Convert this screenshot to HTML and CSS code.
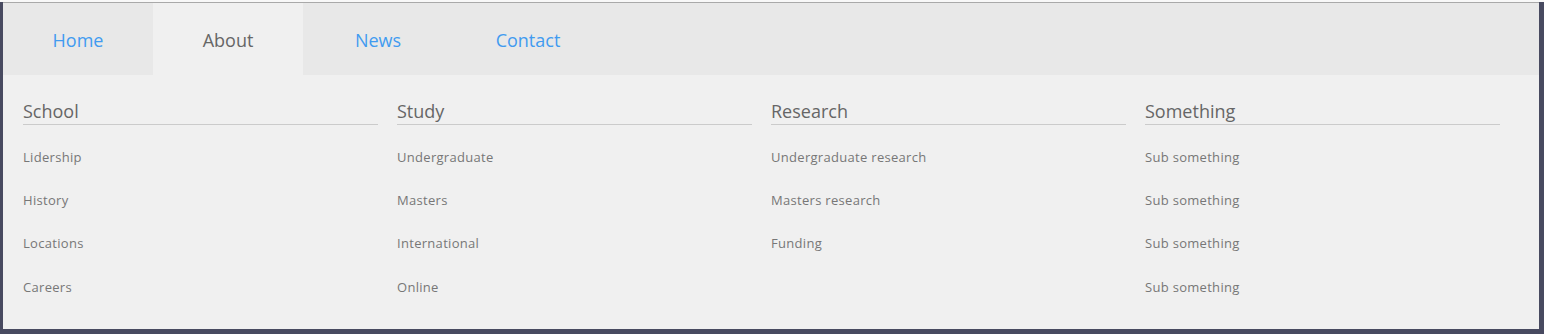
FILE: index.html
```html
<!DOCTYPE html>
<html lang="en">
<head>
  <meta charset="UTF-8" />
  <meta name="viewport" content="width=device-width, initial-scale=1.0" />
  <title>Mega Menu</title>
  <link rel="stylesheet" href="styles.css">
</head>
<body>
  <div class="menu">
    <nav class="tabs">
      <a class="tab" href="#">Home</a>
      <a class="tab active" href="#">About</a>
      <a class="tab" href="#">News</a>
      <a class="tab" href="#">Contact</a>
    </nav>

    <div class="dropdown">
      <div class="col">
        <h3>School</h3>
        <ul>
          <li>Lidership</li>
          <li>History</li>
          <li>Locations</li>
          <li>Careers</li>
        </ul>
      </div>
      <div class="col">
        <h3>Study</h3>
        <ul>
          <li>Undergraduate</li>
          <li>Masters</li>
          <li>International</li>
          <li>Online</li>
        </ul>
      </div>
      <div class="col">
        <h3>Research</h3>
        <ul>
          <li>Undergraduate research</li>
          <li>Masters research</li>
          <li>Funding</li>
        </ul>
      </div>
      <div class="col">
        <h3>Something</h3>
        <ul>
          <li>Sub something</li>
          <li>Sub something</li>
          <li>Sub something</li>
          <li>Sub something</li>
        </ul>
      </div>
    </div>
  </div>
</body>
</html>
```

FILE: styles.css
```css
:root {
  --frame: #484a60;
  --bar-bg: #e8e8e8;
  --panel-bg: #f0f0f0;
  --link: #419bf0;
  --heading: #666;
  --item: #777;
  --rule: #cbcbcb;
}
* { box-sizing: border-box; }
html, body { height: 100%; }
body {
  margin: 0;
  padding: 2px 5px 5px 3px;
  font-family: 'Open Sans', 'Noto Sans', sans-serif;
  background: linear-gradient(#f8f8f8 0 2px, var(--frame) 2px);
}
.menu {
  border-top: 1px solid #a9a9a9;
  background: var(--panel-bg);
}
.tabs {
  display: flex;
  height: 72px;
  background: var(--bar-bg);
}
.tab {
  width: 150px;
  display: flex;
  align-items: center;
  justify-content: center;
  padding-top: 1px;
  font-size: 18px;
  color: var(--link);
  text-decoration: none;
}
.tab.active {
  background: var(--panel-bg);
  color: var(--heading);
}
.dropdown {
  display: flex;
  padding: 23px 20px 20px;
  height: 254px;
}
.col {
  width: 25%;
}
.col h3 {
  width: 95%;
  margin: 0;
  padding: 1px 0 1px;
  font-size: 18px;
  line-height: 24px;
  font-weight: normal;
  color: var(--heading);
  border-bottom: 1px solid var(--rule);
}
.col ul {
  list-style: none;
  margin: 10px 0 0;
  padding: 0;
}
.col li {
  font-size: 13px;
  line-height: 20px;
  padding: 11.67px 0;
  letter-spacing: 0.3px;
  color: var(--item);
}
```
